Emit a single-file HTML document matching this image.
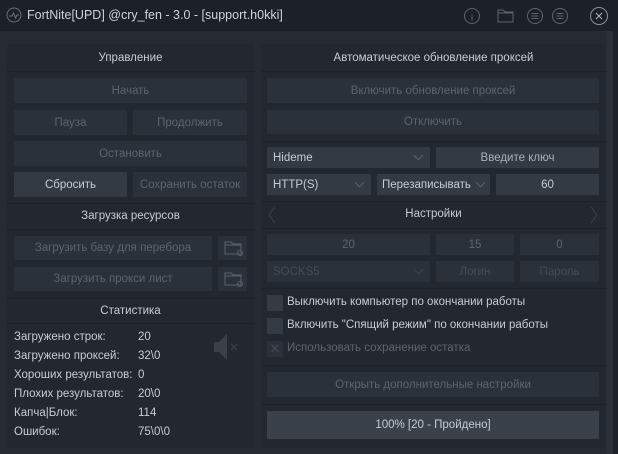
<!DOCTYPE html><html><head><meta charset="utf-8"><style>
*{margin:0;padding:0;box-sizing:border-box}
body{width:618px;height:454px;background:#1f242b;font-family:"Liberation Sans","DejaVu Sans",sans-serif;font-size:11.5px;color:#c8ccd2;position:relative;overflow:hidden}
.a{position:absolute}
.title{left:0;top:0;width:618px;height:31px;background:#1c2027}
.title span{position:absolute;left:27px;top:8px;font-size:12.5px;color:#d0d3d8}
.bg{left:0;top:31px;width:606px;height:423px;background:#262b33}
.pan{background:#232830}
.b{position:absolute;background:#2b313a;color:#5d646e;text-align:center;font-size:11.5px;display:flex;align-items:center;justify-content:center}
.hd{position:absolute;text-align:center;color:#c8ccd2;font-size:11.5px}
.sep{position:absolute;height:1px;background:#1d2128}
.lbl{position:absolute;font-size:11.5px;color:#c8ccd2}
.cb{position:absolute;width:16px;height:16px;background:#343b45}
.arrow{position:absolute;width:7px;height:7px;border-right:1px solid #5d646e;border-bottom:1px solid #5d646e;transform:rotate(45deg)}
</style></head><body>
<div class="a title"><svg class="a" style="left:6px;top:7px" width="16" height="16"><circle cx="8" cy="8" r="7" fill="none" stroke="#6a717b"/><path d="M3 9h3l1.5-3 2 5 1.5-3h2" fill="none" stroke="#6a717b"/></svg><span>FortNite[UPD] @cry_fen - 3.0 - [support.h0kki]</span>
<svg class="a" style="left:462px;top:6px" width="150" height="20" fill="none" stroke="#5e656e"><circle cx="10" cy="10" r="7.5"/><path d="M10 7v0M10 9v5"/><path d="M36 4h5l2 2h8v10h-15z M36 7h15"/><circle cx="73" cy="10" r="7.5"/><path d="M69.5 7.5h7M69.5 10h7M69.5 12.5h7"/><circle cx="98" cy="10" r="7.5"/><path d="M94.5 7.5h7M94.5 10h7M94.5 12.5h7"/><circle cx="137" cy="10" r="8.5" stroke="#8a9099"/><path d="M134 7l6 6M140 7l-6 6" stroke="#b0b5bc"/></svg></div>
<div class="a bg"></div>
<div class="a" style="left:606px;top:31px;width:7px;height:423px;background:#2a3038"></div>
<div class="a" style="left:613px;top:31px;width:5px;height:423px;background:#1d2228"></div>
<div class="a pan" style="left:7px;top:44px;width:247px;height:404px"></div>
<div class="sep" style="left:7px;top:71px;width:247px"></div>
<div class="hd" style="left:7px;top:52px;width:247px">Управление</div>
<div class="b" style="left:14px;top:78px;width:233px;height:25px">Начать</div>
<div class="b" style="left:14px;top:110px;width:113px;height:25px">Пауза</div>
<div class="b" style="left:133px;top:110px;width:114px;height:25px">Продолжить</div>
<div class="b" style="left:14px;top:141px;width:233px;height:25px">Остановить</div>
<div class="b" style="left:14px;top:172px;width:113px;height:25px;background:#333a44;color:#c8ccd2">Сбросить</div>
<div class="b" style="left:133px;top:172px;width:114px;height:25px">Сохранить остаток</div>
<div class="sep" style="left:7px;top:203px;width:247px"></div>
<div class="hd" style="left:7px;top:210px;width:247px">Загрузка ресурсов</div>
<div class="sep" style="left:7px;top:229px;width:247px"></div>
<div class="b" style="left:14px;top:236px;width:198px;height:24px">Загрузить базу для перебора</div>
<div class="b" style="left:218px;top:236px;width:29px;height:24px"><svg width="20" height="16" fill="none" stroke="#5a616b"><path d="M2 2h6l2 2h8v10h-16z M2 5h16"/><circle cx="17" cy="13" r="2.5"/></svg></div>
<div class="b" style="left:14px;top:267px;width:198px;height:24px">Загрузить прокси лист</div>
<div class="b" style="left:218px;top:267px;width:29px;height:24px"><svg width="20" height="16" fill="none" stroke="#5a616b"><path d="M2 2h6l2 2h8v10h-16z M2 5h16"/><circle cx="17" cy="13" r="2.5"/></svg></div>
<div class="sep" style="left:7px;top:298px;width:247px"></div>
<div class="hd" style="left:7px;top:305px;width:247px">Статистика</div>
<div class="sep" style="left:7px;top:323px;width:247px"></div>
<div class="lbl" style="left:14px;top:331px">Загружено строк:</div><div class="lbl" style="left:138px;top:331px">20</div>
<div class="lbl" style="left:14px;top:350px">Загружено проксей:</div><div class="lbl" style="left:138px;top:350px">32\0</div>
<div class="lbl" style="left:14px;top:369px">Хороших результатов:</div><div class="lbl" style="left:138px;top:369px">0</div>
<div class="lbl" style="left:14px;top:388px">Плохих результатов:</div><div class="lbl" style="left:138px;top:388px">20\0</div>
<div class="lbl" style="left:14px;top:407px">Капча|Блок:</div><div class="lbl" style="left:138px;top:407px">114</div>
<div class="lbl" style="left:14px;top:426px">Ошибок:</div><div class="lbl" style="left:138px;top:426px">75\0\0</div>
<svg class="a" style="left:212px;top:332px" width="30" height="30"><path d="M2 10h5l8-8v26l-8-8h-5z" fill="#3a414b"/><path d="M19 12l6 6M25 12l-6 6" stroke="#3a414b" stroke-width="1.2"/></svg>
<div class="a pan" style="left:261px;top:44px;width:345px;height:404px"></div>
<div class="sep" style="left:261px;top:71px;width:345px"></div>
<div class="hd" style="left:261px;top:52px;width:345px">Автоматическое обновление проксей</div>
<div class="b" style="left:267px;top:78px;width:332px;height:25px">Включить обновление проксей</div>
<div class="b" style="left:267px;top:110px;width:332px;height:24px">Отключить</div>
<div class="sep" style="left:261px;top:141px;width:345px"></div>
<div class="b" style="left:267px;top:147px;width:163px;height:21px;background:#333a44;color:#c8ccd2;justify-content:flex-start;padding-left:6px">Hideme</div><div class="arrow" style="left:415px;top:152px"></div>
<div class="b" style="left:436px;top:147px;width:163px;height:21px;background:#333a44;color:#aab0b8">Введите ключ</div>
<div class="b" style="left:267px;top:174px;width:104px;height:21px;background:#333a44;color:#c8ccd2;justify-content:flex-start;padding-left:6px">HTTP(S)</div><div class="arrow" style="left:356px;top:179px"></div>
<div class="b" style="left:377px;top:174px;width:113px;height:21px;background:#333a44;color:#c8ccd2;justify-content:flex-start;padding-left:5px">Перезаписывать</div><div class="arrow" style="left:477px;top:179px"></div>
<div class="b" style="left:496px;top:174px;width:103px;height:21px;background:#333a44;color:#c8ccd2">60</div>
<div class="sep" style="left:261px;top:201px;width:345px"></div>
<div class="hd" style="left:261px;top:208px;width:345px">Настройки</div>
<svg class="a" style="left:268px;top:206px" width="330" height="18" fill="none" stroke="#3a414b"><path d="M7 1l-6 8 6 8M323 1l6 8-6 8"/></svg>
<div class="sep" style="left:261px;top:228px;width:345px"></div>
<div class="b" style="left:267px;top:234px;width:163px;height:21px">20</div>
<div class="b" style="left:436px;top:234px;width:78px;height:21px">15</div>
<div class="b" style="left:520px;top:234px;width:79px;height:21px">0</div>
<div class="b" style="left:267px;top:261px;width:163px;height:21px;color:#454c56;justify-content:flex-start;padding-left:6px">SOCKS5</div><div class="arrow" style="left:415px;top:266px;border-color:#3a414b"></div>
<div class="b" style="left:436px;top:261px;width:78px;height:21px;color:#454c56">Логин</div>
<div class="b" style="left:520px;top:261px;width:79px;height:21px;color:#454c56">Пароль</div>
<div class="sep" style="left:261px;top:288px;width:345px"></div>
<div class="cb" style="left:267px;top:295px"></div><div class="lbl" style="left:287px;top:296px">Выключить компьютер по окончании работы</div>
<div class="cb" style="left:267px;top:318px"></div><div class="lbl" style="left:287px;top:319px">Включить "Спящий режим" по окончании работы</div>
<div class="cb" style="left:267px;top:341px;background:#2b313a;color:#454c56;font-size:13px;text-align:center;line-height:16px">✕</div><div class="lbl" style="left:287px;top:342px;color:#5d646e">Использовать сохранение остатка</div>
<div class="sep" style="left:261px;top:365px;width:345px"></div>
<div class="b" style="left:267px;top:372px;width:332px;height:25px">Открыть дополнительные настройки</div>
<div class="sep" style="left:261px;top:404px;width:345px"></div>
<div class="b" style="left:267px;top:411px;width:332px;height:28px;background:#3a414b;color:#c8ccd2">100% [20 - Пройдено]</div>
</body></html>
